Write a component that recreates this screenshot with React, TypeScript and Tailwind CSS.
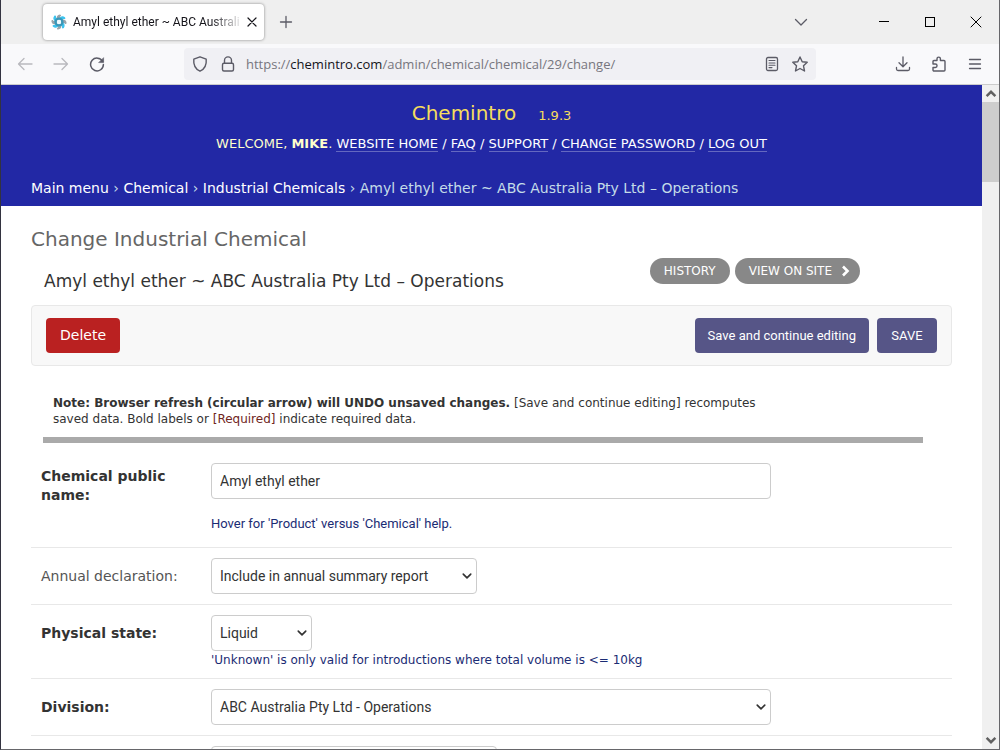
import type { ReactNode, SVGProps } from "react";

const VERDANA = "font-['DejaVu_Sans',Verdana,sans-serif]";
const ROBOTO = "font-[Roboto,sans-serif]";
const SYSTEM = "font-['Open_Sans','Segoe_UI',sans-serif]";

function Icon({ children, ...props }: SVGProps<SVGSVGElement>) {
    return (
        <svg
            width="16"
            height="16"
            viewBox="0 0 16 16"
            fill="none"
            stroke="#5b5b66"
            strokeWidth="1.3"
            strokeLinecap="round"
            strokeLinejoin="round"
            aria-hidden="true"
            {...props}
        >
            {children}
        </svg>
    );
}

function Favicon() {
    const blades = [0, 45, 90, 135, 180, 225, 270, 315];
    return (
        <svg width="16" height="16" viewBox="0 0 16 16" className="shrink-0" aria-hidden="true">
            {blades.map((angle, i) => (
                <path
                    key={angle}
                    d="M5.6 4.5C5.4 2.4 6.4.8 8.8.4c1.2 0 1.6 1 1 1.6-.9.6-1.100 1.400-.6 2.800z"
                    fill={i % 2 === 0 ? "#9aa5ab" : "#3cc3ee"}
                    transform={`rotate(${angle} 8 8)`}
                />
            ))}
            <circle cx="8" cy="8" r="3.400" fill="none" stroke="#3a97b8" strokeWidth="2.400" />
            <circle cx="8" cy="8" r="2.100" fill="#eefaff" />
        </svg>
    );
}

function TabBar() {
    return (
        <div className="flex h-11 shrink-0 items-center bg-[#efefef] pl-[42px]">
            <div className="flex h-9 w-[221px] items-center rounded bg-white pl-2 pr-1 shadow-[0_0_3px_rgba(0,0,0,0.45)]">
                <Favicon />
                <span className={`ml-1.5 min-w-0 flex-1 whitespace-nowrap text-[12px] text-[#15141a] mask-r-from-80% ${ROBOTO}`}>
                    Amyl ethyl ether ~ ABC Australi
                </span>
                <button type="button" aria-label="Close tab" className="shrink-0">
                    <Icon stroke="#15141a" strokeWidth="1.2">
                        <path d="M4 4l8 8M12 4l-8 8" />
                    </Icon>
                </button>
            </div>
            <button type="button" aria-label="New tab" className="ml-3.5">
                <Icon>
                    <path d="M8 2.5v11M2.5 8h11" />
                </Icon>
            </button>
            <div className="ml-auto flex items-center">
                <button type="button" aria-label="List all tabs" className="mr-[67px]">
                    <Icon>
                        <path d="M2.5 5.5L8 11l5.5-5.5" />
                    </Icon>
                </button>
                <div className="flex gap-[30px] pr-[15px]">
                    <button type="button" aria-label="Minimize">
                        <Icon stroke="#000" strokeWidth="1" shapeRendering="crispEdges">
                            <path d="M3 7.5h10" />
                        </Icon>
                    </button>
                    <button type="button" aria-label="Maximize">
                        <Icon stroke="#000" strokeWidth="1" shapeRendering="crispEdges">
                            <path d="M3.5 3.5h9v9h-9z" />
                        </Icon>
                    </button>
                    <button type="button" aria-label="Close window">
                        <Icon stroke="#000" strokeWidth="1">
                            <path d="M3 3l10 10M13 3L3 13" />
                        </Icon>
                    </button>
                </div>
            </div>
        </div>
    );
}

function Toolbar() {
    return (
        <div className="flex h-[41px] shrink-0 items-center border-b border-[#ccc] bg-[#f9f9fb] pl-4">
            <button type="button" aria-label="Back" disabled>
                <Icon stroke="#b9b9be">
                    <path d="M15 8H1.5M7 2.5L1.5 8 7 13.5" />
                </Icon>
            </button>
            <button type="button" aria-label="Forward" disabled className="ml-5">
                <Icon stroke="#b9b9be">
                    <path d="M1 8h13.5M9 2.5L14.5 8 9 13.5" />
                </Icon>
            </button>
            <button type="button" aria-label="Reload" className="ml-5">
                <Icon strokeWidth="1.5">
                    <path d="M13.6 5.4A6.4 6.4 0 1 0 14.4 8.5" />
                    <path d="M14.6 2v4.6H10z" fill="#5b5b66" strokeWidth="0.6" />
                </Icon>
            </button>
            <div className="ml-[79px] flex h-8 w-[632px] items-center rounded bg-[#f0f0f4] px-2">
                <Icon strokeWidth="1.4">
                    <path d="M8 .8l6.2 2.4c.5 5-1.2 9.6-6.2 12C3 12.8 1.3 8.2 1.8 3.2z" />
                </Icon>
                <Icon strokeWidth="1.4" className="ml-3">
                    <rect x="2.5" y="7.2" width="11" height="7.8" rx="1.5" />
                    <path d="M4.5 7V4.4a3.5 3.5 0 0 1 7 0V7" />
                </Icon>
                <span className="ml-2.5 flex-1 whitespace-nowrap pt-0.5 text-[13px] text-[#77767e]">
                    https://<span className="text-[#15141a]">chemintro.com</span>/admin/chemical/chemical/29/change/
                </span>
                <button type="button" aria-label="Reader view">
                    <Icon>
                        <rect x="2.5" y="1.5" width="11" height="13" rx="1.5" />
                        <path d="M5 4.5h6M5 7h6M5 9.3h6M5 11.6h3" strokeWidth="1.1" />
                    </Icon>
                </button>
                <button type="button" aria-label="Bookmark this page" className="ml-3">
                    <Icon strokeWidth="1.4">
                        <path d="M8 1l2.2 4.7 5 .6-3.7 3.5 1 5.2L8 12.5 3.5 15l1-5.200L.8 6.3l5-.6z" />
                    </Icon>
                </button>
            </div>
            <div className="ml-auto flex gap-5 pr-4">
                <button type="button" aria-label="Downloads">
                    <Icon>
                        <path d="M8 1v9.5M4 6.8l4 4 4-4M1.5 11.5V13A1.5 1.5 0 0 0 3 14.5h10a1.5 1.5 0 0 0 1.5-1.5v-1.5" />
                    </Icon>
                </button>
                <button type="button" aria-label="Extensions">
                    <Icon strokeWidth="1.4">
                        <path d="M2 8V5.5a1 1 0 0 1 1-1h3V2.800a1.700 1.700 0 0 1 3.400 0v1.700H13a1 1 0 0 1 1 1V14a1 1 0 0 1-1 1H3a1 1 0 0 1-1-1v-2.500h2.300a1.700 1.700 0 0 0 0-3.500z" />
                    </Icon>
                </button>
                <button type="button" aria-label="Application menu">
                    <Icon>
                        <path d="M2.5 3.5h11M2.5 8h11M2.5 12.5h11" />
                    </Icon>
                </button>
            </div>
        </div>
    );
}

function ScrollBar() {
    return (
        <div className="flex w-[17px] shrink-0 flex-col items-center bg-[#f0f0f0]" aria-hidden="true">
            <Icon className="mt-0.5 mb-px" width="14" height="14" stroke="#606060" strokeWidth="2.8" strokeLinecap="butt" strokeLinejoin="miter">
                <path d="M3 10.500l5-5 5 5" />
            </Icon>
            <div className="h-20 w-full bg-[#cdcdcd]" />
            <Icon className="mb-0.5 mt-auto" width="14" height="14" stroke="#606060" strokeWidth="2.8" strokeLinecap="butt" strokeLinejoin="miter">
                <path d="M3 5.5l5 5 5-5" />
            </Icon>
        </div>
    );
}

const userLinks = ["Website home", "FAQ", "Support", "Change password", "Log out"];
const crumbs = ["Main menu", "Chemical", "Industrial Chemicals"];

function SiteHeader() {
    return (
        <header className="bg-[#2228a5] text-white">
            <div className="flex items-baseline justify-center gap-[22px] pt-3.5 text-[#f5dd5d]">
                <h1 className="text-[20px] leading-7">Chemintro</h1>
                <span className="text-[13px]">1.9.3</span>
            </div>
            <div className="mt-[9px] text-center text-[13px] leading-4 uppercase text-[#ffffcc]">
                Welcome, <strong>Mike</strong>.{" "}
                {userLinks.map((link, i) => (
                    <span key={link} className="text-white">
                        {i > 0 && " / "}
                        <a href="#" className="border-b border-[#6468c0]">{link}</a>
                    </span>
                ))}
            </div>
            <nav aria-label="Breadcrumbs" className="mt-4 px-[30px] pt-2.5 pb-2 text-[14px] leading-5 text-[#c4dce8]">
                {crumbs.map((crumb) => (
                    <span key={crumb}>
                        <a href="#" className="text-white">{crumb}</a>
                        {" › "}
                    </span>
                ))}
                Amyl ethyl ether ~ ABC Australia Pty Ltd – Operations
            </nav>
        </header>
    );
}

interface FormRowProps {
    id: string;
    label: string;
    bold?: boolean;
    twoLines?: boolean;
    children: ReactNode;
}

function FormRow({ id, label, bold, twoLines, children }: FormRowProps) {
    return (
        <div className="flex border-b border-[#e8e8e8] p-2.5">
            <label
                htmlFor={id}
                className={`w-[170px] shrink-0 pr-5 text-[14px] leading-[19px] ${twoLines ? "pt-1" : "pt-[9px]"} ${bold ? "font-bold text-[#333]" : "text-[#555]"}`}
            >
                {label}
            </label>
            <div className="min-w-0 flex-1">{children}</div>
        </div>
    );
}

function Select({ id, value, className }: { id: string; value: string; className: string }) {
    return (
        <div className={`relative ${className}`}>
            <select
                id={id}
                defaultValue={value}
                className={`block h-9 w-full appearance-none rounded border border-[#ccc] bg-white px-2 text-[14px] text-[#333] ${ROBOTO}`}
            >
                <option>{value}</option>
            </select>
            <Icon
                className="pointer-events-none absolute top-[13px] right-[5px]"
                width="10"
                height="10"
                stroke="#333"
                strokeWidth="2.6"
            >
                <path d="M2 5l6 6 6-6" />
            </Icon>
        </div>
    );
}

function ChemicalForm() {
    return (
        <form>
            <div className="flex h-[61px] items-center gap-2 rounded border border-[#e8e8e8] bg-[#f8f8f8] px-3.5">
                <button type="button" className="mr-auto h-[35px] rounded bg-[#ba2121] px-3.5 text-[14px] text-white">
                    Delete
                </button>
                <button type="submit" className={`h-[35px] rounded bg-[#565587] px-[13px] text-[13px] text-white ${ROBOTO}`}>
                    Save and continue editing
                </button>
                <button type="submit" className={`h-[35px] min-w-[60px] rounded bg-[#565587] px-[13px] text-[13px] text-white ${ROBOTO}`}>
                    SAVE
                </button>
            </div>

            <p className="mt-[29px] px-[22px] text-[12px] leading-4 text-[#333]">
                <strong>Note: Browser refresh (circular arrow) will UNDO unsaved changes.</strong> [Save and continue editing] recomputes
                <br />
                saved data. Bold labels or <span className="text-[#70261d]">[Required]</span> indicate required data.
            </p>
            <hr className="mt-2.5 mr-[29px] mb-2.5 ml-3 h-1.5 border-0 bg-[#aaa]" />

            <FormRow id="name" label="Chemical public name:" bold twoLines>
                <input
                    id="name"
                    type="text"
                    defaultValue="Amyl ethyl ether"
                    className={`block h-9 w-full max-w-[560px] rounded border border-[#ccc] px-2 text-[14px] text-[#333] ${ROBOTO}`}
                />
                <p className={`mt-[17px] mb-[5px] text-[13px] leading-4 text-[#1b2c74] ${ROBOTO}`}>
                    Hover for 'Product' versus 'Chemical' help.
                </p>
            </FormRow>
            <FormRow id="declaration" label="Annual declaration:">
                <Select id="declaration" value="Include in annual summary report" className="w-[266px]" />
            </FormRow>
            <FormRow id="state" label="Physical state:" bold>
                <Select id="state" value="Liquid" className="w-[101px]" />
                <p className="mt-0.5 text-[12px] leading-[15px] text-[#1b2c74]">
                    'Unknown' is only valid for introductions where total volume is &lt;= 10kg
                </p>
            </FormRow>
            <FormRow id="division" label="Division:" bold>
                <Select id="division" value="ABC Australia Pty Ltd - Operations" className="max-w-[560px]" />
            </FormRow>
            <FormRow id="next" label="">
                <Select id="next" value="" className="w-[286px]" />
            </FormRow>
        </form>
    );
}

export default function App() {
    return (
        <div className={`flex h-screen flex-col overflow-hidden border-r border-b border-l border-[#66666a] border-l-[#333340] ${SYSTEM}`}>
            <TabBar />
            <Toolbar />
            <div className="flex min-h-0 flex-1">
                <div className={`min-w-0 flex-1 overflow-hidden bg-white ${VERDANA}`}>
                    <SiteHeader />
                    <main className="px-[30px] pt-[19px]">
                        <h2 className="text-[20px] leading-7 text-[#666]">Change Industrial Chemical</h2>
                        <div className="mt-[5px] mb-3.5 flex items-start justify-between gap-4 pr-[92px] pl-[13px]">
                            <h3 className="pt-[13px] text-[17px] leading-5 text-[#333]">Amyl ethyl ether ~ ABC Australia Pty Ltd – Operations</h3>
                            <div className="flex shrink-0 gap-[5px] text-[12px] text-white uppercase">
                                <a href="#" className="flex h-[26px] items-center rounded-full bg-[#888] px-3.5">History</a>
                                <a href="#" className="flex h-[26px] items-center gap-2 rounded-full bg-[#888] pr-2 pl-3.5">
                                    View on site
                                    <Icon width="12" height="12" stroke="#fff" strokeWidth="3.5" strokeLinecap="butt" strokeLinejoin="miter">
                                        <path d="M4 2l6 6-6 6" />
                                    </Icon>
                                </a>
                            </div>
                        </div>
                        <ChemicalForm />
                    </main>
                </div>
                <ScrollBar />
            </div>
        </div>
    );
}
